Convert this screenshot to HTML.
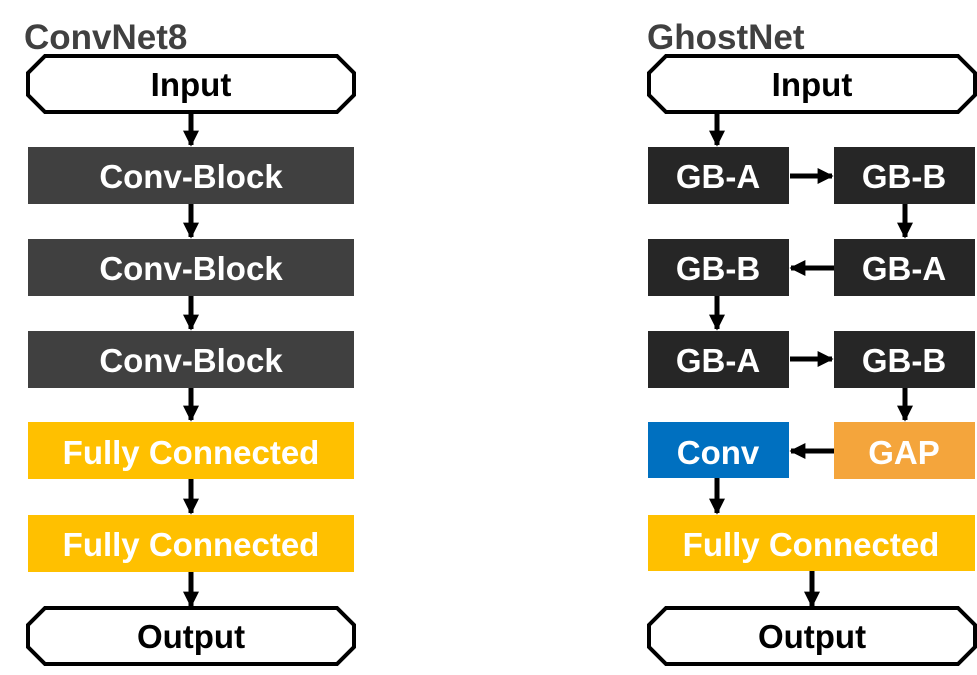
<!DOCTYPE html>
<html><head><meta charset="utf-8"><style>
html,body{margin:0;padding:0;background:#fff;width:977px;height:675px;overflow:hidden}
svg text{font-family:"Liberation Sans",sans-serif;font-weight:bold}
</style></head><body>
<svg width="977" height="675" viewBox="0 0 977 675" xmlns="http://www.w3.org/2000/svg">
<defs><marker id="a" viewBox="0 0 10 10" refX="9" refY="5" markerWidth="3.4" markerHeight="3.2" orient="auto" markerUnits="strokeWidth"><path d="M0,0 L10,5 L0,10 z" fill="#000"/></marker></defs>
<text x="24" y="49" font-size="35" fill="#404040">ConvNet8</text>
<text x="647" y="49" font-size="35" fill="#404040">GhostNet</text>
<g fill="#fff" stroke="#000" stroke-width="4">
<path d="M45,56 H337 L354,73 V95 L337,112 H45 L28,95 V73 Z"/>
<path d="M45,608 H337 L354,625 V647 L337,664 H45 L28,647 V625 Z"/>
<path d="M666,56 H958 L975,73 V95 L958,112 H666 L649,95 V73 Z"/>
<path d="M666,608 H958 L975,625 V647 L958,664 H666 L649,647 V625 Z"/>
</g>
<g fill="#404040"><rect x="28" y="147" width="326" height="57"/><rect x="28" y="239" width="326" height="57"/><rect x="28" y="331" width="326" height="57"/></g>
<g fill="#FFC000"><rect x="28" y="422" width="326" height="57"/><rect x="28" y="515" width="326" height="57"/><rect x="648" y="515" width="327" height="56"/></g>
<g fill="#262626"><rect x="648" y="147" width="141" height="57"/><rect x="834" y="147" width="141" height="57"/><rect x="648" y="239" width="141" height="57"/><rect x="834" y="239" width="141" height="57"/><rect x="648" y="331" width="141" height="57"/><rect x="834" y="331" width="141" height="57"/></g>
<rect x="648" y="422" width="141" height="56" fill="#0070C0"/>
<rect x="834" y="422" width="141" height="57" fill="#F4A53C"/>
<g font-size="33" text-anchor="middle">
<text x="191" y="96" fill="#000">Input</text>
<text x="191" y="648" fill="#000">Output</text>
<text x="812" y="96" fill="#000">Input</text>
<text x="812" y="648" fill="#000">Output</text>
<g fill="#fff">
<text x="191" y="188">Conv-Block</text><text x="191" y="280">Conv-Block</text><text x="191" y="372">Conv-Block</text>
<text x="191" y="464">Fully Connected</text><text x="191" y="556">Fully Connected</text><text x="811" y="556">Fully Connected</text>
<text x="718" y="188">GB-A</text><text x="904" y="188">GB-B</text>
<text x="718" y="280">GB-B</text><text x="904" y="280">GB-A</text>
<text x="718" y="372">GB-A</text><text x="904" y="372">GB-B</text>
<text x="718" y="464">Conv</text><text x="904" y="464">GAP</text>
</g></g>
<g stroke="#000" stroke-width="5" marker-end="url(#a)">
<line x1="191" y1="114" x2="191" y2="145"/><line x1="191" y1="204" x2="191" y2="237"/><line x1="191" y1="296" x2="191" y2="329"/><line x1="191" y1="388" x2="191" y2="420"/><line x1="191" y1="479" x2="191" y2="513"/><line x1="191" y1="572" x2="191" y2="606"/>
<line x1="717" y1="114" x2="717" y2="145"/>
<line x1="790" y1="176" x2="832" y2="176"/>
<line x1="905" y1="204" x2="905" y2="237"/>
<line x1="834" y1="268" x2="791" y2="268"/>
<line x1="717" y1="296" x2="717" y2="329"/>
<line x1="790" y1="359" x2="832" y2="359"/>
<line x1="905" y1="388" x2="905" y2="420"/>
<line x1="834" y1="451" x2="791" y2="451"/>
<line x1="717" y1="478" x2="717" y2="513"/>
<line x1="812" y1="571" x2="812" y2="606"/>
</g>
</svg>
</body></html>
